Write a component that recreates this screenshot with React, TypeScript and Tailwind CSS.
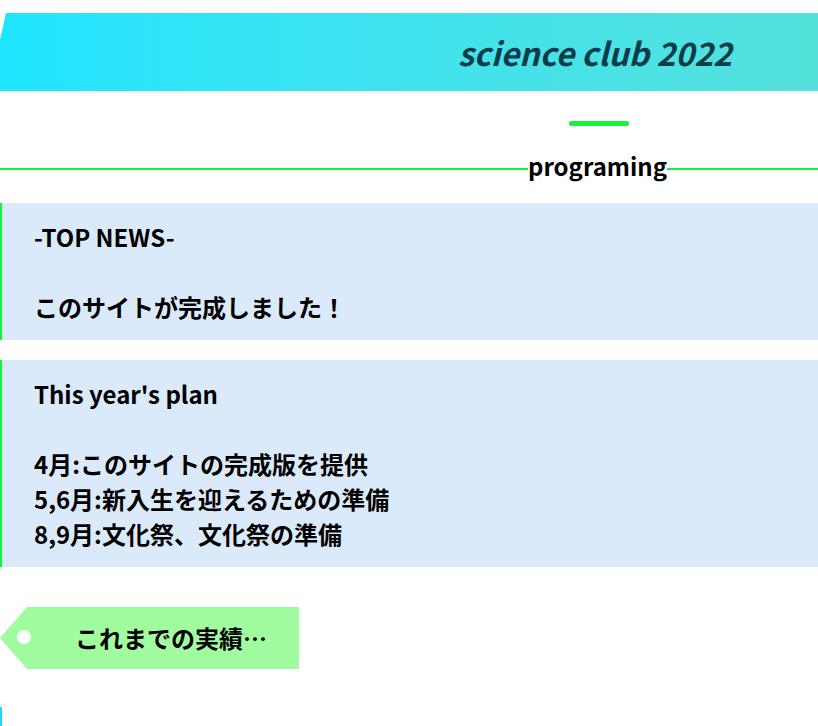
export default function App() {
  const plan = [
    "4月:このサイトの完成版を提供",
    "5,6月:新入生を迎えるための準備",
    "8,9月:文化祭、文化祭の準備",
  ];

  return (
    <div className="min-h-screen w-full bg-white font-['Noto_Sans_CJK_JP','Noto_Sans',sans-serif] font-bold text-black text-[24px]">
      {/* header */}
      <header className="mt-[13px] h-[78px] flex items-center justify-end pr-[86px] bg-gradient-to-r from-[#1ee4ff] to-[#54e1dc] [clip-path:polygon(6px_0,100%_0,100%_100%,0_100%,0_27px)]">
        <h1 className="text-[32px] italic font-semibold text-[#0b3c49] leading-normal">science club 2022</h1>
      </header>

      {/* section title */}
      <div className="mt-[30px] flex justify-end pr-[189px]">
        <div className="h-[5px] w-[60px] rounded-full bg-[#18f03c]" />
      </div>
      <div className="mt-[22px] flex items-center">
        <div className="mt-[6px] h-[2px] flex-1 bg-[#18f03c]" />
        <span className="bg-white leading-normal">programing</span>
        <div className="mt-[6px] h-[2px] w-[151px] bg-[#18f03c]" />
      </div>

      {/* news */}
      <div className="mt-[19px] flex flex-col gap-[20px]">
        <section className="border-l-2 border-[#18f03c] bg-[#dbeafa] pl-[32px] py-[16px] leading-[35px]">
          <p>-TOP NEWS-</p>
          <p>&nbsp;</p>
          <p>このサイトが完成しました！</p>
        </section>
        <section className="border-l-2 border-[#18f03c] bg-[#dbeafa] pl-[32px] py-[16px] leading-[35px]">
          <p>This year's plan</p>
          <p>&nbsp;</p>
          {plan.map((line) => (
            <p key={line}>{line}</p>
          ))}
        </section>
      </div>

      {/* tag */}
      <div className="mt-[40px] relative h-[62px] w-[299px] flex items-center pl-[75px] bg-[#a1fca0] [clip-path:polygon(27px_0,100%_0,100%_100%,27px_100%,0_50%)]">
        <span className="absolute left-[17px] top-[23px] h-[14px] w-[14px] rounded-full bg-white" />
        <span className="leading-normal">これまでの実績…</span>
      </div>

      <div className="mt-[38px] h-[40px] border-l-2 border-[#22d6f7]" />
    </div>
  );
}
